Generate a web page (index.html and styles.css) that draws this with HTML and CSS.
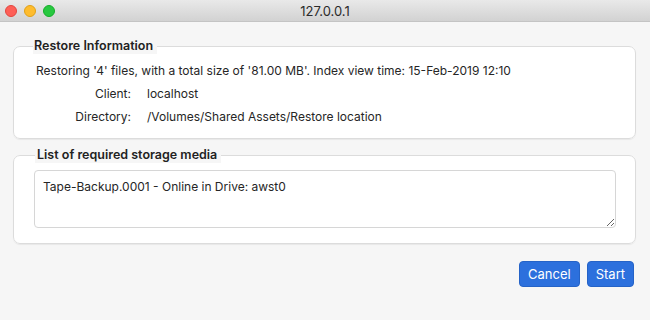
FILE: index.html
```html
<!DOCTYPE html>
<html lang="en">
<head>
    <meta charset="UTF-8">
    <title>127.0.0.1</title>
    <link rel="stylesheet" href="styles.css">
</head>
<body>
    <div class="titlebar">
        <div class="lights">
            <span class="light red"></span>
            <span class="light yellow"></span>
            <span class="light green"></span>
        </div>
        <div class="title">127.0.0.1</div>
    </div>

    <div class="content">
        <fieldset class="group info">
            <legend>Restore Information</legend>
            <p class="summary">Restoring '4' files, with a total size of '81.00 MB'. Index view time: 15-Feb-2019 12:10</p>
            <div class="details">
                <span class="label">Client:</span>
                <span class="value">localhost</span>
                <span class="label">Directory:</span>
                <span class="value">/Volumes/Shared Assets/Restore location</span>
            </div>
        </fieldset>

        <fieldset class="group media">
            <legend>List of required storage media</legend>
            <textarea class="media-list" readonly>Tape-Backup.0001 - Online in Drive: awst0</textarea>
        </fieldset>

        <div class="actions">
            <button class="btn">Cancel</button>
            <button class="btn">Start</button>
        </div>
    </div>
</body>
</html>
```

FILE: styles.css
```css
body {
    margin: 0;
    font-family: Inter, "Noto Sans", sans-serif;
    font-size: 12px;
    color: #262626;
    background-color: #f6f6f6;
}

.titlebar {
    height: 22px;
    display: flex;
    align-items: center;
    position: relative;
    background: linear-gradient(#e9e9e9, #d2d2d2);
    border-bottom: 1px solid #c4c4c4;
    box-sizing: border-box;
}
.lights {
    display: flex;
    gap: 7px;
    padding-left: 5px;
}
.light {
    width: 12px;
    height: 12px;
    border-radius: 50%;
    box-sizing: border-box;
}
.red { background: #fe5f57; border: 1px solid #e2463f; }
.yellow { background: #febc2e; border: 1px solid #e1a116; }
.green { background: #28c840; border: 1px solid #14ae29; }
.title {
    position: absolute;
    left: 0;
    right: 0;
    text-align: center;
    font-size: 13px;
    color: #2b2b2b;
}

.content {
    padding: 16px 14px 0 13px;
}

.group {
    margin: 0;
    background: #fff;
    border: 1px solid #dcdcdc;
    border-radius: 7px;
    box-shadow: 0 1px 1px rgba(0, 0, 0, 0.06);
    min-width: 0;
}
.group legend {
    font-size: 12.5px;
    font-weight: 600;
    line-height: 16px;
    color: #222;
    background: #f6f6f6;
}

.info {
    padding: 5px 20px 10px 22px;
}
.info legend {
    margin-left: -3px;
    padding: 0 4px 0 1px;
}
.summary {
    margin: 0;
    line-height: 23px;
}
.details {
    display: grid;
    grid-template-columns: 95px auto;
    column-gap: 16px;
    line-height: 23px;
}
.label {
    text-align: right;
}

.media {
    margin-top: 8px;
    padding: 7px 19px 15px 20px;
}
.media legend {
    margin-left: 1px;
    padding: 0 4px 0 2px;
}
.media-list {
    display: block;
    width: 100%;
    height: 58px;
    box-sizing: border-box;
    margin: 0;
    padding: 8px 8px;
    font-family: inherit;
    font-size: 12px;
    line-height: 16px;
    color: #262626;
    border: 1px solid #d6d6d6;
    border-radius: 4px;
    outline: none;
    resize: vertical;
}

.actions {
    display: flex;
    justify-content: flex-end;
    gap: 7px;
    margin-top: 17px;
    padding-right: 2px;
}
.btn {
    height: 26px;
    padding: 0 8px;
    font-family: inherit;
    font-size: 13px;
    color: #fff;
    background-color: #2c70dd;
    border: 1px solid #2563c7;
    border-radius: 4px;
}
```
